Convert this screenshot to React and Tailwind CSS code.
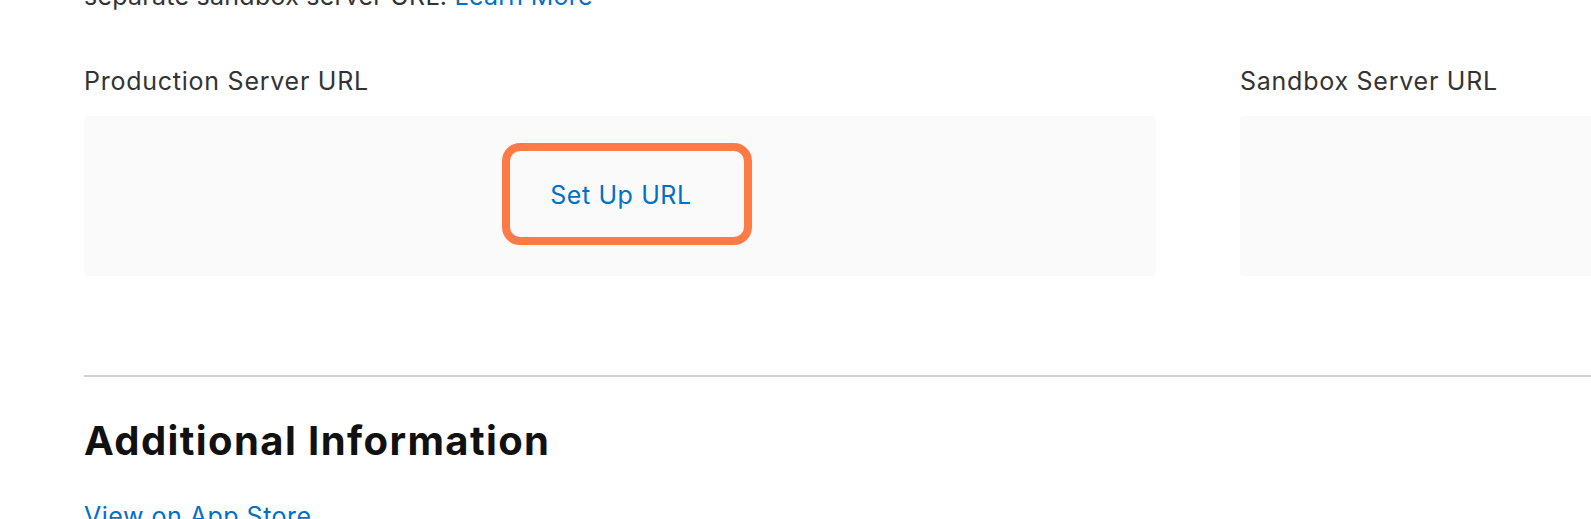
export default function App() {
  return (
    <div className="w-[1591px] h-[519px] overflow-hidden bg-white font-['Inter','Liberation_Sans',sans-serif] text-[#333333]">
      <div className="w-[2400px] pl-[84px]">
        {/* intro text, clipped at the top of the shot */}
        <p className="mt-[-19px] text-[25px] leading-[30px] tracking-[0.25px]">
          separate sandbox server URL.{' '}
          <a href="#" className="text-[#0070c9]">Learn More</a>
        </p>

        {/* server URL columns */}
        <div className="mt-[55px] grid grid-cols-[1072px_1072px] gap-x-[84px]">
          <div>
            <h3 className="text-[25px] leading-[30px] tracking-[0.75px]">Production Server URL</h3>
            <div className="mt-[20px] h-[160px] rounded-[4px] bg-[#fafafa] flex items-center justify-center">
              <button className="ml-[14px] mb-[4px] w-[250px] h-[102px] pr-[12px] pt-[3px] rounded-[18px] border-[8px] border-[#ff7a45] text-[25px] tracking-[0.6px] text-[#0070c9]">
                Set Up URL
              </button>
            </div>
          </div>
          <div>
            <h3 className="text-[25px] leading-[30px] tracking-[0.75px]">Sandbox Server URL</h3>
            <div className="mt-[20px] h-[160px] rounded-[4px] bg-[#fafafa]"></div>
          </div>
        </div>

        <hr className="mt-[99px] border-0 border-t-2 border-[#d2d2d2]" />

        <h2 className="mt-[40px] text-[40px] leading-[48px] font-bold tracking-[1.4px] text-[#111111]">
          Additional Information
        </h2>
        <a href="#" className="block mt-[36px] text-[25px] leading-[30px] tracking-[0.5px] text-[#0070c9]">
          View on App Store
        </a>
      </div>
    </div>
  );
}
